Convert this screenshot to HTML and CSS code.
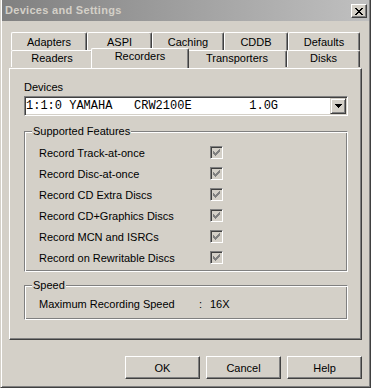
FILE: index.html
```html
<!DOCTYPE html>
<html lang="en">
<head>
    <meta charset="UTF-8">
    <title>Devices and Settings</title>
    <link rel="stylesheet" href="styles.css">
</head>
<body>
    <div class="window">
        <div class="titlebar">
            <span class="title">Devices and Settings</span>
            <span class="close">
                <svg width="8" height="7" viewBox="0 0 8 7" shape-rendering="crispEdges">
                    <path d="M0 0h2v1h1v1h2v-1h1v-1h2v1h-1v1h-1v1h-1v1h1v1h1v1h1v1h-2v-1h-1v-1h-2v1h-1v1h-2v-1h1v-1h1v-1h1v-1h-1v-1h-1v-1h-1z" fill="#000"/>
                </svg>
            </span>
        </div>

        <div class="dialog">
            <div class="tab-row tab-row-back">
                <div class="tab tab-adapters">Adapters</div>
                <div class="tab tab-aspi">ASPI</div>
                <div class="tab tab-caching">Caching</div>
                <div class="tab tab-cddb">CDDB</div>
                <div class="tab tab-defaults">Defaults</div>
            </div>
            <div class="tab-row tab-row-front">
                <div class="tab tab-readers">Readers</div>
                <div class="tab tab-recorders is-active">Recorders</div>
                <div class="tab tab-transporters">Transporters</div>
                <div class="tab tab-disks">Disks</div>
            </div>

            <div class="panel">
                <div class="field-label">Devices</div>
                <div class="combo">
                    <span class="combo-text">1:1:0 YAMAHA   CRW2100E        1.0G</span>
                    <span class="combo-button">
                        <svg width="7" height="4" viewBox="0 0 7 4" shape-rendering="crispEdges">
                            <path d="M0 0h7v1h-1v1h-1v1h-1v1h-1v-1h-1v-1h-1v-1h-1z" fill="#000"/>
                        </svg>
                    </span>
                </div>

                <div class="group group-features">
                    <div class="group-title">Supported Features</div>
                    <div class="feature-list">
                        <div class="feature"><span>Record Track-at-once</span><span class="checkbox"><svg width="11" height="11" viewBox="0 0 11 11" shape-rendering="crispEdges"><path d="M2 4h1v1h1v1h1v-1h1v-1h1v-1h1v-1h1v3h-1v1h-1v1h-1v1h-1v1h-1v-1h-1v-1h-1z" fill="#808080"/></svg></span></div>
                        <div class="feature"><span>Record Disc-at-once</span><span class="checkbox"><svg width="11" height="11" viewBox="0 0 11 11" shape-rendering="crispEdges"><path d="M2 4h1v1h1v1h1v-1h1v-1h1v-1h1v-1h1v3h-1v1h-1v1h-1v1h-1v1h-1v-1h-1v-1h-1z" fill="#808080"/></svg></span></div>
                        <div class="feature"><span>Record CD Extra Discs</span><span class="checkbox"><svg width="11" height="11" viewBox="0 0 11 11" shape-rendering="crispEdges"><path d="M2 4h1v1h1v1h1v-1h1v-1h1v-1h1v-1h1v3h-1v1h-1v1h-1v1h-1v1h-1v-1h-1v-1h-1z" fill="#808080"/></svg></span></div>
                        <div class="feature"><span>Record CD+Graphics Discs</span><span class="checkbox"><svg width="11" height="11" viewBox="0 0 11 11" shape-rendering="crispEdges"><path d="M2 4h1v1h1v1h1v-1h1v-1h1v-1h1v-1h1v3h-1v1h-1v1h-1v1h-1v1h-1v-1h-1v-1h-1z" fill="#808080"/></svg></span></div>
                        <div class="feature"><span>Record MCN and ISRCs</span><span class="checkbox"><svg width="11" height="11" viewBox="0 0 11 11" shape-rendering="crispEdges"><path d="M2 4h1v1h1v1h1v-1h1v-1h1v-1h1v-1h1v3h-1v1h-1v1h-1v1h-1v1h-1v-1h-1v-1h-1z" fill="#808080"/></svg></span></div>
                        <div class="feature"><span>Record on Rewritable Discs</span><span class="checkbox"><svg width="11" height="11" viewBox="0 0 11 11" shape-rendering="crispEdges"><path d="M2 4h1v1h1v1h1v-1h1v-1h1v-1h1v-1h1v3h-1v1h-1v1h-1v1h-1v1h-1v-1h-1v-1h-1z" fill="#808080"/></svg></span></div>
                    </div>
                </div>

                <div class="group group-speed">
                    <div class="group-title">Speed</div>
                    <div class="speed-row">
                        <span>Maximum Recording Speed</span>
                        <span>:</span>
                        <span>16X</span>
                    </div>
                </div>
            </div>

            <div class="actions">
                <button class="btn">OK</button>
                <button class="btn">Cancel</button>
                <button class="btn">Help</button>
            </div>
        </div>
    </div>
</body>
</html>
```

FILE: styles.css
```css
body {
    margin: 0;
    font-family: "Liberation Sans", Arial, sans-serif;
    font-size: 11px;
    color: #000;
    background-color: #d4d0c8;
}

.window {
    width: 371px;
    height: 388px;
    box-sizing: border-box;
    padding: 0 1px 1px 1px;
    background-color: #d4d0c8;
    border-left: 1px solid #d4d0c8;
    border-right: 1px solid #404040;
    border-bottom: 1px solid #404040;
    box-shadow: inset 1px 0 #fff, inset -1px -1px #808080;
}

.titlebar {
    display: flex;
    justify-content: space-between;
    height: 21px;
    padding: 0 2px 0 3px;
    background: linear-gradient(to right, #808080, #c0c0c0);
    color: #d4d0c8;
    font-weight: bold;
    line-height: 21px;
}

.title {
    letter-spacing: 0.3px;
}

.close {
    display: flex;
    align-items: center;
    justify-content: center;
    width: 16px;
    height: 14px;
    margin-top: 4px;
    box-sizing: border-box;
    background-color: #d4d0c8;
    border: 1px solid;
    border-color: #fff #404040 #404040 #fff;
    box-shadow: inset -1px -1px #808080;
}

.dialog {
    padding: 11px 7px 0;
}

/* tabs */
.tab-row {
    display: flex;
    margin-left: 2px;
}

.tab {
    box-sizing: border-box;
    border: 1px solid #fff;
    border-right-color: #404040;
    border-bottom: 0;
    border-radius: 2px 2px 0 0;
    box-shadow: inset -1px 0 #808080;
    background-color: #d4d0c8;
    text-align: center;
    line-height: 14px;
}

.tab-row-back .tab {
    height: 18px;
    padding-top: 2px;
}

.tab-row-front .tab {
    height: 17px;
}

.tab-row-front .tab.is-active {
    position: relative;
    z-index: 1;
    height: 20px;
    margin: -2px -2px 0;
}

.tab-adapters { width: 76px; }
.tab-aspi { width: 65px; }
.tab-caching { width: 72px; }
.tab-cddb { width: 64px; }
.tab-defaults { width: 72px; }
.tab-readers { width: 82px; }
.tab-recorders { width: 98px; }
.tab-transporters { width: 100px; }
.tab-disks { width: 73px; }

/* panel */
.panel {
    box-sizing: border-box;
    height: 272px;
    padding: 12px 14px 0;
    border: 1px solid;
    border-color: #fff #404040 #404040 #fff;
    box-shadow: inset -1px -1px #808080;
}

.field-label {
    line-height: 13px;
}

.combo {
    display: flex;
    width: 324px;
    height: 20px;
    margin-top: 2px;
    box-sizing: border-box;
    padding: 1px;
    background-color: #fff;
    border: 1px solid;
    border-color: #808080 #fff #fff #808080;
    box-shadow: inset 1px 1px #404040, inset -1px -1px #d4d0c8;
}

.combo-text {
    flex: 1;
    font-family: "Liberation Mono", "Courier New", monospace;
    font-size: 12px;
    line-height: 16px;
    white-space: pre;
}

.combo-button {
    display: flex;
    align-items: center;
    justify-content: center;
    width: 16px;
    height: 16px;
    box-sizing: border-box;
    background-color: #d4d0c8;
    border: 1px solid;
    border-color: #d4d0c8 #404040 #404040 #d4d0c8;
    box-shadow: inset 1px 1px #fff, inset -1px -1px #808080;
}

/* groups */
.group {
    width: 324px;
    box-sizing: border-box;
    padding-left: 14px;
    border: 1px solid;
    border-color: #808080 #fff #fff #808080;
    box-shadow: inset 1px 1px #fff, inset -1px -1px #808080;
}

.group-title {
    display: table;
    margin: -7px 0 0 -7px;
    padding: 0 1px;
    line-height: 13px;
    background-color: #d4d0c8;
}

.group-features {
    margin-top: 15px;
    padding-bottom: 3px;
}

.feature-list {
    margin-top: 4px;
}

.feature {
    display: grid;
    grid-template-columns: 171px 13px;
    align-items: center;
    height: 21px;
}

.checkbox {
    width: 13px;
    height: 13px;
    box-sizing: border-box;
    background-color: #d4d0c8;
    border: 1px solid;
    border-color: #808080 #fff #fff #808080;
    box-shadow: inset 1px 1px #404040, inset -1px -1px #d4d0c8;
}

.checkbox svg {
    display: block;
}

.group-speed {
    margin-top: 13px;
    padding-bottom: 5px;
}

.speed-row {
    display: grid;
    grid-template-columns: 160px 11px auto;
    align-items: center;
    height: 21px;
    margin-top: 1px;
}

/* buttons */
.actions {
    display: flex;
    justify-content: flex-end;
    gap: 6px;
    margin-top: 16px;
}

.btn {
    width: 75px;
    height: 23px;
    padding: 0;
    font-family: inherit;
    font-size: 11px;
    color: #000;
    background-color: #d4d0c8;
    border: 1px solid;
    border-color: #fff #404040 #404040 #fff;
    box-shadow: inset -1px -1px #808080;
}
```
